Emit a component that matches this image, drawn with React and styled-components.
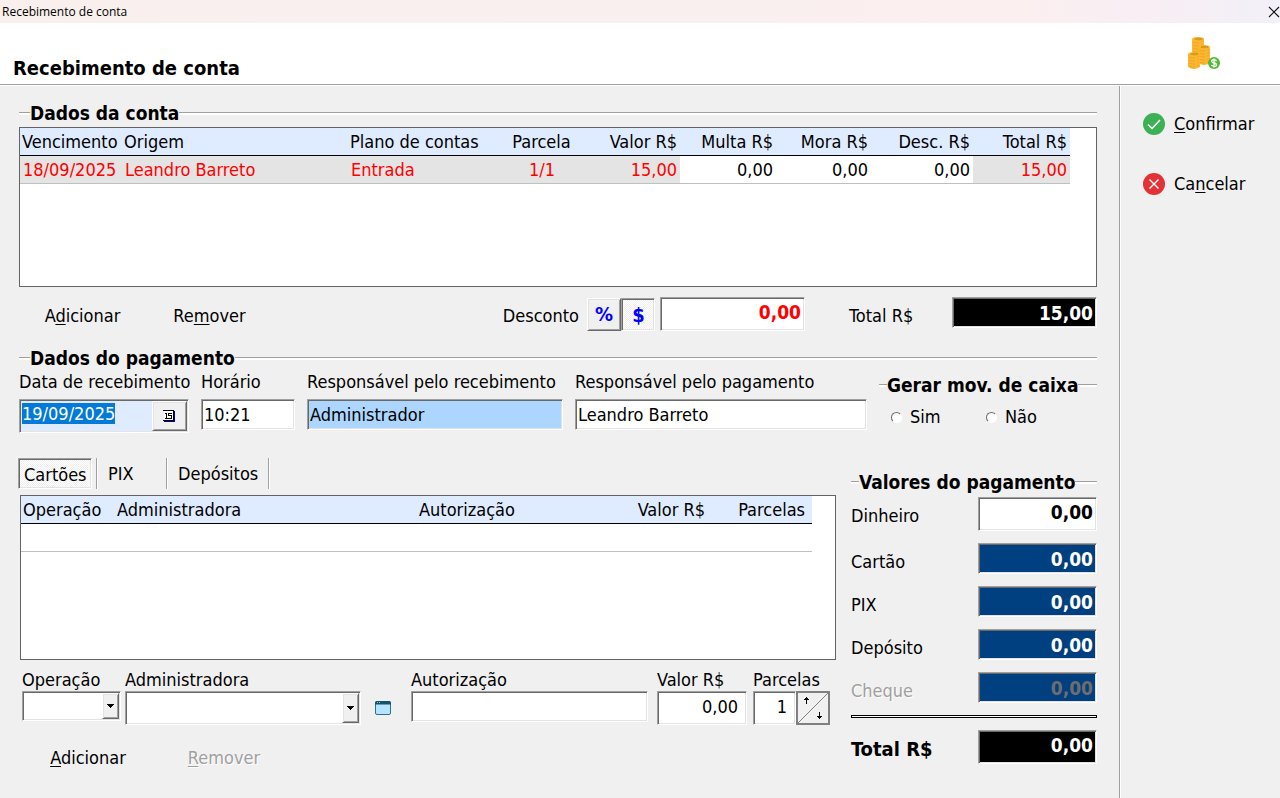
import { useEffect, useRef, useState } from "react";
import styled, { createGlobalStyle, css } from "styled-components";

export default function App() {
  const [discountMode, setDiscountMode] = useState("$");
  const [tab, setTab] = useState("Cartões");
  const dateRef = useRef(null);

  useEffect(() => {
    dateRef.current.focus();
    dateRef.current.select();
  }, []);

  return (
    <Window>
      <GlobalStyle />
      <TitleBar>
        <span>Recebimento de conta</span>
        <CloseButton aria-label="Fechar">
          <svg width="12" height="12" viewBox="0 0 12 12">
            <path d="M1 1 11 11M11 1 1 11" stroke="#111" strokeWidth="1.1" />
          </svg>
        </CloseButton>
      </TitleBar>
      <Header>
        <Heading>Recebimento de conta</Heading>
        <CoinsIcon />
      </Header>

      <Body>
        <Main>
          <GroupTitle>Dados da conta</GroupTitle>
          <AccountGrid>
            <AccountTable>
              <colgroup>
                {accountColumns.map((c) => (
                  <col key={c.label} style={{ width: c.width }} />
                ))}
              </colgroup>
              <thead>
                <tr>
                  {accountColumns.map((c) => (
                    <Th key={c.label} $align={c.align}>
                      {c.label}
                    </Th>
                  ))}
                </tr>
              </thead>
              <tbody>
                <tr>
                  {accountColumns.map((c) => (
                    <Td key={c.label} $align={c.align} $locked={!c.editable}>
                      {c.value}
                    </Td>
                  ))}
                </tr>
              </tbody>
            </AccountTable>
          </AccountGrid>

          <AccountBar>
            <TextButton $width={127}>
              A<u>d</u>icionar
            </TextButton>
            <TextButton $width={127}>
              Re<u>m</u>over
            </TextButton>
            <Discount>
              <label htmlFor="desconto">Desconto</label>
              <Toggles>
                {["%", "$"].map((m) => (
                  <Toggle
                    key={m}
                    $down={discountMode === m}
                    aria-pressed={discountMode === m}
                    onClick={() => setDiscountMode(m)}
                  >
                    {m}
                  </Toggle>
                ))}
              </Toggles>
              <Amount id="desconto" $width={145} $tall $tone="red" defaultValue="0,00" />
            </Discount>
            <AccountTotal>
              <label htmlFor="total-conta">Total R$</label>
              <Amount id="total-conta" $width={145} $tone="black" defaultValue="15,00" readOnly />
            </AccountTotal>
          </AccountBar>

          <GroupTitle>Dados do pagamento</GroupTitle>
          <PaymentRow>
            <Field $width={170}>
              <label htmlFor="data">Data de recebimento</label>
              <DateBox>
                <DateInput id="data" ref={dateRef} defaultValue="19/09/2025" />
                <CalendarButton aria-label="Calendário">
                  <svg width="13" height="13" viewBox="0 0 13 13" shapeRendering="crispEdges">
                    <path d="M1 1h10v10H1z" fill="#fff" />
                    <path d="M0 0h11v1H0zM0 10h11v1H0zM10 1h1v10h-1z" fill="#000" />
                    <path d="M11 1h1v11H1v-1h10z" fill="#0000a0" />
                    <path d="M2 3h2v5H3V4H2zM2 8h3v1H2zM5 3h4v1H6v1h3v4H5V8h3V6H5z" fill="#000" />
                  </svg>
                </CalendarButton>
              </DateBox>
            </Field>
            <Field $width={94}>
              <label htmlFor="horario">Horário</label>
              <TextInput id="horario" defaultValue="10:21" />
            </Field>
            <Field $width={256}>
              <label htmlFor="recebedor">Responsável pelo recebimento</label>
              <TextInput id="recebedor" $filled defaultValue="Administrador" />
            </Field>
            <Field $grow>
              <label htmlFor="pagador">Responsável pelo pagamento</label>
              <TextInput id="pagador" defaultValue="Leandro Barreto" />
            </Field>
            <CashGroup>
              <GroupTitle $short>Gerar mov. de caixa</GroupTitle>
              <Radios>
                <RadioLabel>
                  <Radio type="radio" name="caixa" /> Sim
                </RadioLabel>
                <RadioLabel>
                  <Radio type="radio" name="caixa" /> Não
                </RadioLabel>
              </Radios>
            </CashGroup>
          </PaymentRow>

          <Lower>
            <Methods>
              <Tabs role="tablist">
                {tabs.map((t) => (
                  <TabSlot key={t.label} $width={t.width}>
                    <Tab
                      role="tab"
                      aria-selected={tab === t.label}
                      $active={tab === t.label}
                      onClick={() => setTab(t.label)}
                    >
                      {t.label}
                    </Tab>
                  </TabSlot>
                ))}
              </Tabs>
              <MethodPanel>
                <CardGrid>
                  <CardTable>
                    <colgroup>
                      {cardColumns.map((c) => (
                        <col key={c.label} style={{ width: c.width }} />
                      ))}
                    </colgroup>
                    <thead>
                      <tr>
                        {cardColumns.map((c) => (
                          <Th key={c.label} $align={c.align} $pad={c.pad}>
                            {c.label}
                          </Th>
                        ))}
                      </tr>
                    </thead>
                    <tbody>
                      <tr>
                        {cardColumns.map((c) => (
                          <Td key={c.label} />
                        ))}
                      </tr>
                    </tbody>
                  </CardTable>
                </CardGrid>

                <CardForm>
                  <CardField $width={99}>
                    <label htmlFor="operacao">Operação</label>
                    <Combo id="operacao" />
                  </CardField>
                  <CardField $width={236} $gap={4}>
                    <label htmlFor="administradora">Administradora</label>
                    <Combo id="administradora" tall />
                  </CardField>
                  <IconButton aria-label="Abrir cadastro">
                    <svg width="16" height="14" viewBox="0 0 16 14">
                      <rect x="0.5" y="0.5" width="15" height="13" rx="1.5" fill="#b4e4ff" stroke="#2a7186" />
                      <path d="M0 3.5V2Q0 0 2 0h12q2 0 2 2v1.500z" fill="#135468" />
                      <path d="M2 1.500h1M4 1.500h1" stroke="#8fc6d6" />
                    </svg>
                  </IconButton>
                  <CardField $grow $gap={20}>
                    <label htmlFor="autorizacao">Autorização</label>
                    <TextInput id="autorizacao" />
                  </CardField>
                  <CardField $width={90} $gap={9}>
                    <label htmlFor="valor">Valor R$</label>
                    <TextInput id="valor" $tall $right defaultValue="0,00" />
                  </CardField>
                  <CardField $width={77} $gap={6}>
                    <label htmlFor="parcelas">Parcelas</label>
                    <Stepper>
                      <TextInput id="parcelas" $tall $right defaultValue="1" />
                      <Spin>
                        <SpinButton aria-label="Mais">
                          <svg width="7" height="7" viewBox="0 0 7 7" shapeRendering="crispEdges">
                            <path d="M3 0h1v1h1v1h1v1H4v4H3V3H1V2h1V1h1z" />
                          </svg>
                        </SpinButton>
                        <SpinButton $end aria-label="Menos">
                          <svg width="7" height="7" viewBox="0 0 7 7" shapeRendering="crispEdges">
                            <path d="M3 0h1v4h2v1H5v1H4v1H3V6H2V5H1V4h2z" />
                          </svg>
                        </SpinButton>
                      </Spin>
                    </Stepper>
                  </CardField>
                </CardForm>

                <CardActions>
                  <TextButton $width={136}>
                    <u>A</u>dicionar
                  </TextButton>
                  <TextButton $width={136} disabled>
                    <u>R</u>emover
                  </TextButton>
                </CardActions>
              </MethodPanel>
            </Methods>

            <Values>
              <GroupTitle $short>Valores do pagamento</GroupTitle>
              <ValueRows>
                <ValueRow>
                  <label htmlFor="dinheiro">Dinheiro</label>
                  <Amount id="dinheiro" $width={119} $tall defaultValue="0,00" />
                </ValueRow>
                {["Cartão", "PIX", "Depósito", "Cheque"].map((name) => (
                  <ValueRow key={name} $off={name === "Cheque"}>
                    <label htmlFor={name}>{name}</label>
                    <Amount
                      id={name}
                      $width={119}
                      $tone="blue"
                      defaultValue="0,00"
                      disabled={name === "Cheque"}
                      readOnly
                    />
                  </ValueRow>
                ))}
                <Rule />
                <ValueRow $strong>
                  <label htmlFor="total">Total R$</label>
                  <Amount id="total" $width={119} $tall $tone="black" defaultValue="0,00" readOnly />
                </ValueRow>
              </ValueRows>
            </Values>
          </Lower>
        </Main>

        <Side>
          <SideButton>
            <svg width="22" height="22" viewBox="0 0 22 22" fill="none">
              <circle cx="11" cy="11" r="11" fill="#3bb054" />
              <path d="M5 11.500 9 15.500 17 7" stroke="#fff" strokeWidth="1.500" />
            </svg>
            <span>
              <u>C</u>onfirmar
            </span>
          </SideButton>
          <SideButton>
            <svg width="22" height="22" viewBox="0 0 22 22" fill="none">
              <circle cx="11" cy="11" r="11" fill="#e03237" />
              <path d="M6.500 6.500 15.500 15.500M15.500 6.500 6.500 15.500" stroke="#fff" strokeWidth="1.400" />
            </svg>
            <span>
              Ca<u>n</u>celar
            </span>
          </SideButton>
        </Side>
      </Body>
    </Window>
  );
}

function Combo({ id, tall }) {
  return (
    <ComboBox $tall={tall}>
      <Select id={id}>
        <option value=""></option>
      </Select>
      <ComboArrow>
        <svg width="7" height="4" viewBox="0 0 7 4" shapeRendering="crispEdges">
          <path d="M0 0h7v1H6v1H5v1H4v1H3V3H2V2H1V1H0z" />
        </svg>
      </ComboArrow>
    </ComboBox>
  );
}

function CoinStack({ x, y, height }) {
  const ridges = [];
  for (let r = 4; r < height - 2; r += 3) ridges.push(r);
  return (
    <g transform={`translate(${x} ${y})`}>
      <path d={`M0 2v${height - 4}q6 4 12 0v-${height - 4}z`} fill="#fdb62f" />
      <ellipse cx="6" cy="2" rx="6" ry="2" fill="#fdb62f" />
      <ellipse cx="6.500" cy="2" rx="4" ry="1.200" fill="#d69a1c" />
      {ridges.map((r) => (
        <path key={r} d={`M1 ${r + 1}q3 1.500 6 1M9 ${r + 1}l2-.5`} stroke="#e5a021" strokeWidth="0.7" fill="none" />
      ))}
    </g>
  );
}

function CoinsIcon() {
  return (
    <svg width="33" height="33" viewBox="0 0 33 33">
      <CoinStack x={5} y={0} height={17} />
      <CoinStack x={11} y={8} height={20} />
      <CoinStack x={1} y={15} height={17} />
      <circle cx="27" cy="26" r="6" fill="#56b839" />
      <path
        d="M29.500 24q-1-1.300-2.500-1.300-2.300 0-2.300 1.600 0 1.300 2.300 1.700 2.500.4 2.500 1.900 0 1.500-2.500 1.500-1.700 0-2.600-1.400M27 21.500v9"
        stroke="#fff"
        strokeWidth="1.300"
        fill="none"
      />
    </svg>
  );
}

const accountColumns = [
  { label: "Vencimento", width: 102, value: "18/09/2025" },
  { label: "Origem", width: 226, value: "Leandro Barreto" },
  { label: "Plano de contas", width: 156, value: "Entrada" },
  { label: "Parcela", width: 76, align: "center", value: "1/1" },
  { label: "Valor R$", width: 100, align: "right", value: "15,00" },
  { label: "Multa R$", width: 96, align: "right", value: "0,00", editable: true },
  { label: "Mora R$", width: 95, align: "right", value: "0,00", editable: true },
  { label: "Desc. R$", width: 102, align: "right", value: "0,00", editable: true },
  { label: "Total R$", width: 97, align: "right", value: "15,00" },
];

const cardColumns = [
  { label: "Operação", width: 94 },
  { label: "Administradora", width: 302 },
  { label: "Autorização", width: 180 },
  { label: "Valor R$", width: 111, align: "right" },
  { label: "Parcelas", width: 104, align: "right", pad: 7 },
];

const tabs = [
  { label: "Cartões", width: 79 },
  { label: "PIX", width: 70 },
  { label: "Depósitos", width: 102 },
];

const tones = {
  red: css`
    color: #ff0000;
  `,
  black: css`
    background: #000;
    color: #fff;
  `,
  blue: css`
    background: #004080;
    color: #fff;
  `,
};

const sunken = css`
  border: 1px solid;
  border-color: #a0a0a0 #fff #fff #a0a0a0;
  border-radius: 0;
  box-shadow:
    inset 1px 1px #696969,
    inset -1px -1px #e3e3e3;
`;

const raised = css`
  border: 1px solid;
  border-color: #fff #696969 #696969 #fff;
  box-shadow:
    inset 1px 1px #e3e3e3,
    inset -1px -1px #a0a0a0;
`;

const dither = css`
  background: repeating-conic-gradient(#fff 0 25%, #f0f0f0 0 50%) 0 0 / 2px 2px;
`;

const GlobalStyle = createGlobalStyle`
  * {
    box-sizing: border-box;
  }

  body {
    margin: 0;
    background: #f0f0f0;
    color: #000;
    font: 18px/24px "DejaVu Sans Condensed", "Noto Sans", sans-serif;
  }

  button,
  input,
  select {
    margin: 0;
    padding: 0;
    border: 0;
    outline: 0;
    background: none;
    color: inherit;
    font: inherit;
  }

  label {
    white-space: nowrap;
  }

  u {
    text-underline-offset: 2px;
    text-decoration-thickness: 1px;
  }
`;

const Window = styled.div`
  display: flex;
  flex-direction: column;
  min-height: 100vh;
`;

const TitleBar = styled.div`
  display: flex;
  align-items: center;
  justify-content: space-between;
  height: 23px;
  padding-left: 2px;
  background: linear-gradient(90deg, #f9f0ee 0%, #fbeff0 80%, #f8eef4 90%, #f2f0f8 100%);
  font-family: "Open Sans", "Noto Sans", sans-serif;
  font-size: 12px;
`;

const CloseButton = styled.button`
  display: flex;
`;

const Header = styled.header`
  display: flex;
  align-items: flex-start;
  justify-content: space-between;
  height: 62px;
  padding: 14px 60px 0 13px;
  border-bottom: 1px solid #a0a0a0;
  background: #fff;
`;

const Heading = styled.h1`
  margin: 19px 0 0;
  font-size: 20px;
  line-height: 24px;
`;

const Body = styled.div`
  display: flex;
  flex: 1;
  border-top: 1px solid #fff;
`;

const Main = styled.main`
  flex: 1;
  min-width: 0;
  padding: 15px 22px 20px 19px;
`;

const Side = styled.aside`
  display: flex;
  flex-direction: column;
  align-items: flex-start;
  width: 161px;
  padding: 8px 0 0 23px;
  border-left: 1px solid #a0a0a0;
  box-shadow: inset 1px 0 #fff;
`;

const SideButton = styled.button`
  display: flex;
  align-items: center;
  gap: 9px;
  height: 60px;
`;

const GroupTitle = styled.h2`
  display: flex;
  align-items: center;
  margin: 0;
  font-size: 19px;
  line-height: 24px;
  white-space: nowrap;

  &::before,
  &::after {
    content: "";
    width: ${({ $short }) => ($short ? 8 : 11)}px;
    height: 2px;
    border-top: 1px solid #a0a0a0;
    background: #fff;
  }

  &::after {
    flex: 1;
  }
`;

const GridBox = styled.div`
  border: 1px solid #646464;
  background: #fff;
  overflow: hidden;
`;

const AccountGrid = styled(GridBox)`
  height: 160px;
  margin-top: 2px;
`;

const CardGrid = styled(GridBox)`
  height: 165px;
`;

const Table = styled.table`
  border-collapse: separate;
  border-spacing: 0;
  table-layout: fixed;
`;

const AccountTable = styled(Table)`
  width: 1050px;
`;

const CardTable = styled(Table)`
  width: 791px;
`;

const Th = styled.th`
  height: 28px;
  padding: 0 ${({ $pad }) => $pad || 3}px 0 2px;
  border-bottom: 1px solid #000;
  background: #dfebff;
  font-weight: normal;
  text-align: ${({ $align }) => $align || "left"};
  white-space: nowrap;
`;

const Td = styled.td`
  height: 28px;
  padding: 0 3px;
  border-bottom: 1px solid #c0c0c0;
  background: ${({ $locked }) => ($locked ? "#e4e4e4" : "#fff")};
  color: ${({ $locked }) => ($locked ? "#ff0000" : "#000")};
  text-align: ${({ $align }) => $align || "left"};
  white-space: nowrap;
`;

const AccountBar = styled.div`
  display: flex;
  align-items: flex-start;
  height: 59px;
  padding-top: 10px;
  line-height: 38px;
`;

const TextButton = styled.button`
  width: ${({ $width }) => $width}px;

  &:disabled {
    color: #a0a0a0;
    text-shadow: 1px 1px #fff;
  }
`;

const Discount = styled.div`
  display: flex;
  gap: 8px;
  margin-left: auto;
`;

const Toggles = styled.div`
  display: flex;
  margin: 1px -3px 0 0;
`;

const Toggle = styled.button`
  width: 34px;
  height: 33px;
  color: #0000ff;
  font-size: 20px;
  font-weight: bold;
  line-height: 29px;
  ${({ $down }) => ($down ? sunken : raised)}
  ${({ $down }) =>
    $down &&
    css`
      padding: 2px 0 0 1px;
      ${dither}
    `}
`;

const AccountTotal = styled.div`
  display: flex;
  justify-content: space-between;
  width: 248px;
  margin-left: 44px;
`;

const TextInput = styled.input`
  width: 100%;
  height: ${({ $tall }) => ($tall ? 34 : 31)}px;
  padding: 0 ${({ $right }) => ($right ? 8 : 2)}px ${({ $tall }) => ($tall ? 4 : 0)}px 2px;
  background: ${({ $filled }) => ($filled ? "#add6ff" : "#fff")};
  text-align: ${({ $right }) => ($right ? "right" : "left")};
  ${sunken}
`;

const Amount = styled.input`
  width: ${({ $width }) => $width}px;
  height: ${({ $tall }) => ($tall ? 34 : 31)}px;
  padding: 0 3px ${({ $tall }) => ($tall ? 4 : 0)}px;
  background: #fff;
  font-size: 19px;
  font-weight: bold;
  text-align: right;
  ${sunken}
  ${({ $tone }) => tones[$tone]}

  &:disabled {
    color: #6d6d6d;
  }
`;

const PaymentRow = styled.div`
  display: flex;
  gap: 12px;
  height: 88px;
`;

const Field = styled.div`
  display: flex;
  flex-direction: column;
  gap: 5px;
  width: ${({ $width }) => $width}px;
  flex: ${({ $grow }) => ($grow ? 1 : "none")};
`;

const DateBox = styled.div`
  display: flex;
  height: 34px;
  padding: 1px;
  background: #dfebff;
  ${sunken}
`;

const DateInput = styled.input`
  flex: 1;
  min-width: 0;
  height: 25px;
  padding-left: 1px;

  &::selection {
    background: rgba(0, 120, 215, 0.99);
    color: #fff;
  }
`;

const CalendarButton = styled.button`
  display: flex;
  align-items: center;
  justify-content: center;
  width: 35px;
  background: #f0f0f0;
  ${raised}
`;

const CashGroup = styled.div`
  width: 218px;
  padding-top: 3px;
`;

const Radios = styled.div`
  display: flex;
  padding: 8px 0 0 12px;
`;

const RadioLabel = styled.label`
  display: flex;
  align-items: center;
  gap: 8px;
  width: 95px;
`;

const Radio = styled.input`
  appearance: none;
  width: 11px;
  height: 11px;
  border: 1px solid;
  border-color: #696969 #fff #fff #696969;
  border-radius: 50%;
  background: #fff;

  &:checked {
    background: radial-gradient(#000 2px, #fff 3px);
  }
`;

const Lower = styled.div`
  display: flex;
  gap: 15px;
  margin-left: -1px;
`;

const Methods = styled.div`
  flex: 1;
  min-width: 0;
`;

const MethodPanel = styled.div`
  padding-left: 2px;
`;

const Tabs = styled.div`
  display: flex;
  height: 37px;
`;

const TabSlot = styled.div`
  width: ${({ $width }) => $width}px;
  height: 31px;
  border-right: 1px solid #a0a0a0;
  box-shadow: 1px 0 #fff;
`;

const Tab = styled.button`
  height: 31px;
  padding: 0 11px;
  ${({ $active }) =>
    $active &&
    css`
      padding: 2px 4px 0 5px;
      ${sunken}
      ${dither}
    `}
`;

const CardForm = styled.div`
  display: flex;
  padding: 8px 6px 0 2px;
`;

const CardField = styled.div`
  display: flex;
  flex-direction: column;
  width: ${({ $width }) => $width}px;
  flex: ${({ $grow }) => ($grow ? 1 : "none")};
  margin-left: ${({ $gap }) => $gap || 0}px;
  line-height: 23px;
`;

const ComboBox = styled.div`
  display: grid;
  height: ${({ $tall }) => ($tall ? 34 : 30)}px;
  padding: 1px;
  background: #fff;
  ${sunken}
`;

const Select = styled.select`
  grid-area: 1 / 1;
  appearance: none;
  width: 100%;
  padding: 0 20px 0 2px;
`;

const ComboArrow = styled.span`
  grid-area: 1 / 1;
  justify-self: end;
  display: flex;
  align-items: center;
  justify-content: center;
  width: 17px;
  background: #f0f0f0;
  pointer-events: none;
  ${raised}
`;

const IconButton = styled.button`
  display: flex;
  align-items: flex-end;
  height: 47px;
  margin-left: 14px;
`;

const Stepper = styled.div`
  display: flex;

  ${TextInput} {
    flex: 1;
    min-width: 0;
  }
`;

const Spin = styled.div`
  display: flex;
  width: 34px;
  height: 34px;
  padding: 4px 5px;
  border: 2px solid #808080;
  background: linear-gradient(to bottom right, #f0f0f0 49%, #808080 49%, #808080 51%, #f0f0f0 51%);
`;

const SpinButton = styled.button`
  display: flex;
  flex: 1;
  align-self: ${({ $end }) => ($end ? "flex-end" : "flex-start")};
  justify-content: ${({ $end }) => ($end ? "flex-end" : "flex-start")};
`;

const CardActions = styled.div`
  margin-top: 21px;
`;

const Values = styled.section`
  width: 246px;
  padding-top: 12px;
`;

const ValueRows = styled.div`
  display: flex;
  flex-direction: column;
  gap: 12px;
  padding-top: 3px;
`;

const ValueRow = styled.div`
  display: flex;
  align-items: flex-start;
  justify-content: space-between;
  color: ${({ $off }) => ($off ? "#a0a0a0" : "#000")};
  font-size: ${({ $strong }) => ($strong ? 20 : 18)}px;
  font-weight: ${({ $strong }) => ($strong ? "bold" : "normal")};
  text-shadow: ${({ $off }) => ($off ? "1px 1px #fff" : "none")};

  label {
    padding-top: 8px;
    line-height: 22px;
  }

  input {
    text-shadow: none;
  }
`;

const Rule = styled.hr`
  width: 100%;
  height: 3px;
  margin: 0;
  border: 1px solid #000;
  background: #fff;
`;
